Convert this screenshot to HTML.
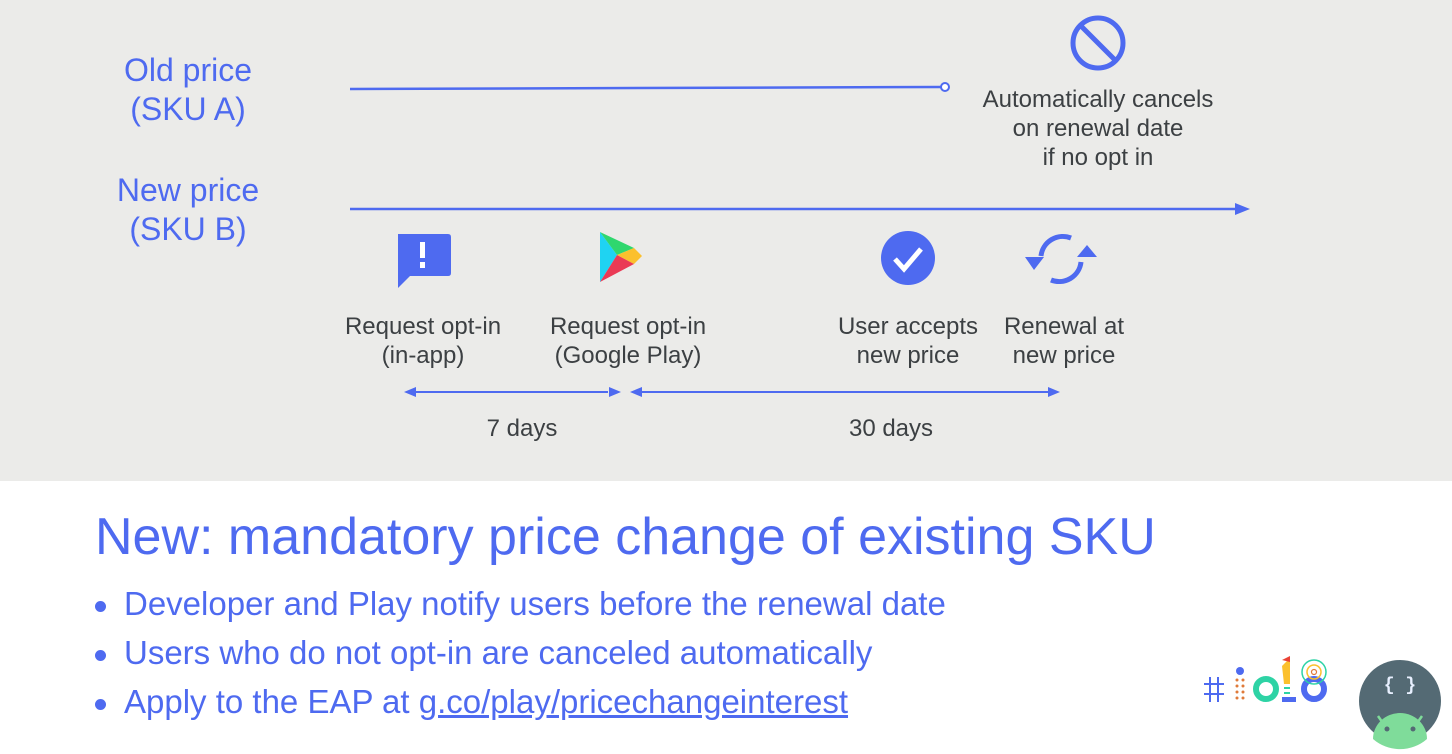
<!DOCTYPE html>
<html><head><style>
body{margin:0;width:1452px;height:754px;overflow:hidden;font-family:"Liberation Sans",sans-serif;position:relative;background:#fff}
.top{position:absolute;left:0;top:0;width:1452px;height:481px;background:#ebebe9}
.t{position:absolute;text-align:center;color:#3c4043;font-size:24px;line-height:29px;white-space:nowrap}
.b{position:absolute;text-align:center;color:#4e6af0;font-size:32px;line-height:39px;white-space:nowrap}
.li{position:absolute;left:95px;color:#4e6af0;font-size:33px;white-space:nowrap}
.li:before{content:"";position:absolute;left:0;top:16px;width:11px;height:11px;border-radius:50%;background:#4e6af0}
.li span{margin-left:29px}
</style></head><body>
<div class="top"></div>
<div class="b" style="left:88px;top:51px;width:200px">Old price<br>(SKU A)</div>
<div class="b" style="left:88px;top:171px;width:200px">New price<br>(SKU B)</div>
<div class="t" style="left:948px;top:85px;width:300px">Automatically cancels<br>on renewal date<br>if no opt in</div>
<div class="t" style="left:323px;top:312px;width:200px">Request opt-in<br>(in-app)</div>
<div class="t" style="left:528px;top:312px;width:200px">Request opt-in<br>(Google Play)</div>
<div class="t" style="left:808px;top:312px;width:200px">User accepts<br>new price</div>
<div class="t" style="left:964px;top:312px;width:200px">Renewal at<br>new price</div>
<div class="t" style="left:422px;top:414px;width:200px">7 days</div>
<div class="t" style="left:791px;top:414px;width:200px">30 days</div>
<svg width="1452" height="481" style="position:absolute;left:0;top:0">
<g stroke="#4e6af0" fill="#4e6af0">
<line x1="350" y1="89" x2="941" y2="87" stroke-width="2.5"/>
<circle cx="945" cy="87" r="4" fill="#fff" stroke-width="2"/>
<line x1="350" y1="209" x2="1236" y2="209" stroke-width="2.5"/>
<polygon points="1250,209 1235,203 1235,215" stroke="none"/>
<line x1="416" y1="392" x2="608" y2="392" stroke-width="2"/>
<polygon points="404,392 416,387 416,397" stroke="none"/>
<polygon points="621,392 609,387 609,397" stroke="none"/>
<line x1="642" y1="392" x2="1048" y2="392" stroke-width="2"/>
<polygon points="630,392 642,387 642,397" stroke="none"/>
<polygon points="1060,392 1048,387 1048,397" stroke="none"/>
<circle cx="1098" cy="43" r="25" fill="none" stroke-width="5"/>
<line x1="1081" y1="26" x2="1115" y2="60" stroke-width="5"/>
<circle cx="908" cy="258" r="27" stroke="none"/>
</g>
<path d="M398 234h50q3 0 3 3v36q0 3-3 3h-38l-12 12z" fill="#4e6af0"/>
<rect x="420" y="242" width="5" height="16" fill="#fff"/><rect x="420" y="262" width="5" height="6" fill="#fff"/>
<path d="M895 259l9 10 17-20" stroke="#fff" stroke-width="5" fill="none"/>
<g transform="translate(62,0)">
<path d="M538 232L555 255 538 282z" fill="#1fd3f2"/>
<path d="M538 232L555 255 572 248z" fill="#2fd76e"/>
<path d="M572 248L555 255 572 264 580 256z" fill="#fbc02d"/>
<path d="M538 282L555 255 572 264z" fill="#ea3a55"/>
</g>
<g fill="none" stroke="#4e6af0" stroke-width="5">
<path d="M1071 238a22 22 0 0 0-30 18"/>
<path d="M1051 280a22 22 0 0 0 30-18"/>
</g>
<polygon points="1025,257 1044,257 1034,270" fill="#4e6af0"/>
<polygon points="1087,245 1097,257 1077,257" fill="#4e6af0"/>
</svg>
<div style="position:absolute;left:95px;top:507px;color:#4e6af0;font-size:52px;white-space:nowrap">New: mandatory price change of existing SKU</div>
<div class="li" style="top:585px"><span>Developer and Play notify users before the renewal date</span></div>
<div class="li" style="top:634px"><span>Users who do not opt-in are canceled automatically</span></div>
<div class="li" style="top:683px"><span>Apply to the EAP at <u>g.co/play/pricechangeinterest</u></span></div>
<svg width="262" height="114" style="position:absolute;left:1190px;top:640px">
<g stroke="#4e6af0" stroke-width="2"><line x1="20" y1="37" x2="20" y2="62"/><line x1="28" y1="37" x2="28" y2="62"/><line x1="14" y1="44" x2="34" y2="44"/><line x1="14" y1="54" x2="34" y2="54"/></g>
<circle cx="50" cy="31" r="4" fill="#4e6af0"/>
<g fill="#e07a3a"><circle cx="47" cy="40" r="1.5"/><circle cx="53" cy="40" r="1.5"/><circle cx="47" cy="46" r="1.5"/><circle cx="53" cy="46" r="1.5"/><circle cx="47" cy="52" r="1.5"/><circle cx="53" cy="52" r="1.5"/><circle cx="47" cy="58" r="1.5"/><circle cx="53" cy="58" r="1.5"/></g>
<circle cx="76" cy="49" r="10" fill="none" stroke="#2ed3a5" stroke-width="6"/>
<path d="M92 26l8-8v26h-6z" fill="#fbc02d"/><path d="M92 20l8-4v6z" fill="#ea4335"/>
<rect x="94" y="47" width="6" height="2" fill="#2ed3a5"/><rect x="94" y="52" width="6" height="2" fill="#2ed3a5"/>
<rect x="92" y="57" width="14" height="5" fill="#4e6af0"/>
<circle cx="124" cy="49" r="10" fill="none" stroke="#4e6af0" stroke-width="6"/>
<circle cx="124" cy="32" r="12" fill="none" stroke="#2ed3a5" stroke-width="1.5"/>
<circle cx="124" cy="32" r="7" fill="none" stroke="#fbc02d" stroke-width="1.5"/>
<circle cx="124" cy="32" r="2.5" fill="none" stroke="#e07a3a" stroke-width="1.2"/>
<circle cx="210" cy="61" r="41" fill="#546a74"/>
<path d="M183 99a27 26 0 0 1 54 0 41 41 0 0 1-54 0z" fill="#7fdc9a"/>
<line x1="188" y1="76" x2="195" y2="86" stroke="#7fdc9a" stroke-width="2.5"/>
<line x1="232" y1="76" x2="225" y2="86" stroke="#7fdc9a" stroke-width="2.5"/>
<circle cx="197" cy="89" r="2.5" fill="#546a74"/><circle cx="223" cy="89" r="2.5" fill="#546a74"/>
<text x="210" y="50" fill="#e8f0ff" font-size="18" text-anchor="middle" font-family="Liberation Mono" font-weight="bold">{ }</text>
</svg>
</body></html>
